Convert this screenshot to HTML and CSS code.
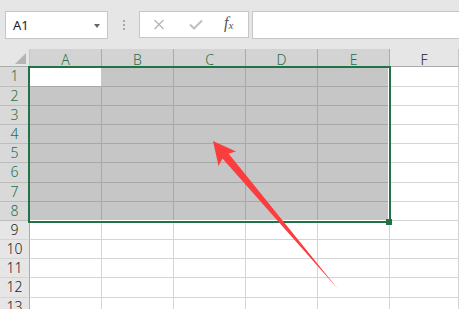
FILE: index.html
```html
<!DOCTYPE html>
<html>
<head>
<meta charset="utf-8">
<link rel="stylesheet" href="styles.css">
</head>
<body>
<div class="app">
  <div class="toolbar">
    <div class="namebox">
      <span class="ref">A1</span>
      <span class="drop"></span>
    </div>
    <div class="sep"><i></i><i></i><i></i></div>
    <div class="btns">
      <svg class="ico" width="12" height="11" viewBox="0 0 12 11"><path d="M1.5 1 L10.5 10 M10.5 1 L1.5 10" stroke="#b4b4b4" stroke-width="1.2" fill="none"/></svg>
      <svg class="ico" width="14" height="11" viewBox="0 0 14 11"><path d="M1 5.5 L5 9.5 L13 1.5" stroke="#bfbfbf" stroke-width="2" fill="none"/></svg>
      <span class="fx">f<sub>x</sub></span>
    </div>
    <div class="formula"></div>
  </div>
  <div class="sheet">
    <div class="corner"><span class="tri"></span></div>
    <div class="ch s">A</div><div class="ch s">B</div><div class="ch s">C</div><div class="ch s">D</div><div class="ch s">E</div><div class="ch">F</div>

    <div class="rh s">1</div><div class="c a"></div><div class="c s"></div><div class="c s"></div><div class="c s"></div><div class="c s"></div><div class="c"></div>
    <div class="rh s">2</div><div class="c s"></div><div class="c s"></div><div class="c s"></div><div class="c s"></div><div class="c s"></div><div class="c"></div>
    <div class="rh s">3</div><div class="c s"></div><div class="c s"></div><div class="c s"></div><div class="c s"></div><div class="c s"></div><div class="c"></div>
    <div class="rh s">4</div><div class="c s"></div><div class="c s"></div><div class="c s"></div><div class="c s"></div><div class="c s"></div><div class="c"></div>
    <div class="rh s">5</div><div class="c s"></div><div class="c s"></div><div class="c s"></div><div class="c s"></div><div class="c s"></div><div class="c"></div>
    <div class="rh s">6</div><div class="c s"></div><div class="c s"></div><div class="c s"></div><div class="c s"></div><div class="c s"></div><div class="c"></div>
    <div class="rh s">7</div><div class="c s"></div><div class="c s"></div><div class="c s"></div><div class="c s"></div><div class="c s"></div><div class="c"></div>
    <div class="rh s">8</div><div class="c s"></div><div class="c s"></div><div class="c s"></div><div class="c s"></div><div class="c s"></div><div class="c"></div>
    <div class="rh">9</div><div class="c"></div><div class="c"></div><div class="c"></div><div class="c"></div><div class="c"></div><div class="c"></div>
    <div class="rh">10</div><div class="c"></div><div class="c"></div><div class="c"></div><div class="c"></div><div class="c"></div><div class="c"></div>
    <div class="rh">11</div><div class="c"></div><div class="c"></div><div class="c"></div><div class="c"></div><div class="c"></div><div class="c"></div>
    <div class="rh">12</div><div class="c"></div><div class="c"></div><div class="c"></div><div class="c"></div><div class="c"></div><div class="c"></div>
    <div class="rh">13</div><div class="c"></div><div class="c"></div><div class="c"></div><div class="c"></div><div class="c"></div><div class="c"></div>
  </div>
  <div class="selection"></div>
  <div class="handle"></div>
  <svg class="arrow" width="459" height="309" viewBox="0 0 459 309">
    <polygon points="213,141 236,151.5 228.5,153.5 337.5,288.5 222.5,158.5 218.5,166" fill="#fb3d3d"/>
  </svg>
</div>
</body>
</html>
```
FILE: styles.css
```css
* { box-sizing: border-box; }
html, body { margin: 0; padding: 0; }
body {
  width: 459px;
  height: 309px;
  overflow: hidden;
  background: #e6e6e6;
  font-family: "Noto Sans", "Liberation Sans", sans-serif;
}
.app {
  position: relative;
  width: 459px;
  height: 309px;
  overflow: hidden;
}
.toolbar {
  height: 49px;
  display: flex;
  align-items: flex-start;
  padding: 11px 0 0 5px;
  background: #e6e6e6;
}
.namebox {
  width: 103px;
  height: 28px;
  background: #fff;
  border: 1px solid #c6c6c6;
  display: flex;
  align-items: center;
  justify-content: space-between;
  padding: 0 7px 0 7px;
}
.ref {
  font-size: 13px;
  color: #222;
  line-height: 1;
}
.drop {
  width: 0;
  height: 0;
  border-left: 3.5px solid transparent;
  border-right: 3.5px solid transparent;
  border-top: 4px solid #666;
  margin-top: 2px;
}
.sep {
  width: 31px;
  height: 28px;
  display: flex;
  flex-direction: column;
  align-items: center;
  justify-content: center;
  gap: 2px;
  padding-left: 1px;
}
.sep i {
  display: block;
  width: 2px;
  height: 2px;
  background: #a9a9a9;
}
.btns {
  width: 110px;
  height: 27px;
  background: #fff;
  border: 1px solid #c6c6c6;
  display: flex;
  align-items: center;
  padding: 0 0 0 13px;
}
.btns .ico { display: block; }
.btns .ico:nth-child(2) { margin-left: 24px; }
.fx {
  font-family: "Liberation Serif", "DejaVu Serif", serif;
  font-style: italic;
  font-size: 16px;
  color: #555;
  margin-left: 21px;
  line-height: 1;
  margin-top: -3px;
}
.fx sub {
  font-size: 11px;
  vertical-align: -1px;
}
.formula {
  flex: 1;
  height: 28px;
  margin-left: 3px;
  margin-right: -4px;
  background: #fff;
  border: 1px solid #c6c6c6;
}
.sheet {
  display: grid;
  grid-template-columns: 30px repeat(5, 72px) 1fr;
  grid-template-rows: 18px 20px 19px 19px 19px 19px 20px 19px 19px 19px 19px 19px 20px 19px;
}
.corner {
  background: #e6e6e6;
  border-right: 1px solid #c6c6c6;
  border-bottom: 1px solid #ababab;
  display: flex;
  align-items: flex-end;
  justify-content: flex-end;
  padding: 0 3px 2px 0;
}
.tri {
  width: 0;
  height: 0;
  border-left: 11px solid transparent;
  border-bottom: 11px solid #b4b4b4;
}
.ch {
  background: #e6e6e6;
  border-right: 1px solid #c6c6c6;
  border-bottom: 1px solid #ababab;
  text-align: center;
  font-size: 14px;
  line-height: 17px;
  padding-top: 2px;
  color: #222;
  font-weight: 300;
}
.ch.s {
  background: #d3d3d3;
  border-right-color: #ababab;
  color: #237148;
}
.rh {
  background: #e6e6e6;
  border-right: 1px solid #ababab;
  border-bottom: 1px solid #d4d4d4;
  text-align: center;
  font-size: 14px;
  line-height: 18px;
  color: #222;
  font-weight: 300;
}
.rh.s {
  background: #d9d9d9;
  border-bottom-color: #bdbdbd;
  color: #237148;
}
.c {
  background: #fff;
  border-right: 1px solid #d4d4d4;
  border-bottom: 1px solid #d4d4d4;
}
.c.s {
  background: #c6c6c6;
  border-right-color: #a8a8a8;
  border-bottom-color: #a8a8a8;
}
.c.a {
  background: #fff;
  border-right-color: #c6c6c6;
  border-bottom-color: #a8a8a8;
}
.selection {
  position: absolute;
  left: 28px;
  top: 66px;
  width: 363px;
  height: 157px;
  border: 2px solid #217346;
  box-shadow: inset -1px -1px 0 #fff;
  pointer-events: none;
}
.handle {
  position: absolute;
  left: 386px;
  top: 219px;
  width: 6px;
  height: 6px;
  background: #217346;
}
.arrow {
  position: absolute;
  left: 0;
  top: 0;
  pointer-events: none;
}
```
